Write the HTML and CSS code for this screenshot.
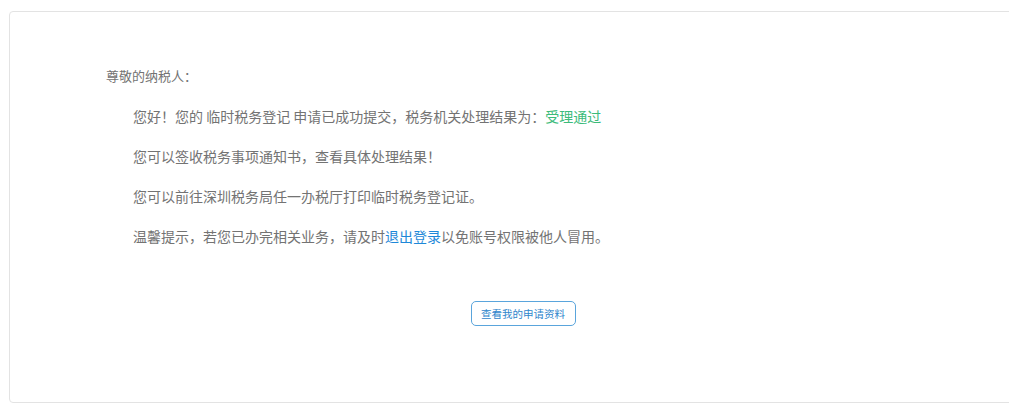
FILE: index.html
```html
<!DOCTYPE html>
<html lang="zh-CN">
<head>
    <meta charset="UTF-8">
    <title>申请结果</title>
    <link rel="stylesheet" href="styles.css">
</head>
<body>
    <div class="result-box">
        <p class="greeting">尊敬的纳税人：</p>
        <p class="line">您好！您的 临时税务登记 申请已成功提交，税务机关处理结果为：<span class="status">受理通过</span></p>
        <p class="line">您可以签收税务事项通知书，查看具体处理结果！</p>
        <p class="line">您可以前往深圳税务局任一办税厅打印临时税务登记证。</p>
        <p class="line">温馨提示，若您已办完相关业务，请及时<a href="#" class="logout">退出登录</a>以免账号权限被他人冒用。</p>
        <div class="actions">
            <button type="button" class="view-btn">查看我的申请资料</button>
        </div>
    </div>
</body>
</html>
```
FILE: styles.css
```css
body {
    margin: 0;
    padding: 11px 0 0 9px;
    background-color: #fff;
    font-family: "Noto Sans CJK SC", "Liberation Sans", sans-serif;
    overflow: hidden;
}

.result-box {
    width: 1020px;
    height: 392px;
    box-sizing: border-box;
    border: 1px solid #e3e3e3;
    border-radius: 4px;
    padding: 54px 0 0 96px;
}

.result-box p {
    margin: 0;
    font-size: 14px;
    line-height: 20px;
    color: #737373;
}

.greeting {
    margin-bottom: 20px !important;
    font-size: 13px !important;
}

.line {
    padding-left: 27px;
    margin-bottom: 20px !important;
}

.status {
    color: #3cbb7a;
}

.logout {
    color: #1e88d8;
    text-decoration: none;
}

.actions {
    width: 834px;
    text-align: center;
    padding-top: 33px;
}

.view-btn {
    background-color: #fff;
    border: 1px solid #5aa5dc;
    border-radius: 5px;
    color: #2f86cc;
    font-family: inherit;
    font-size: 10.5px;
    width: 105px;
    height: 25px;
    padding: 0;
    cursor: pointer;
}
```
